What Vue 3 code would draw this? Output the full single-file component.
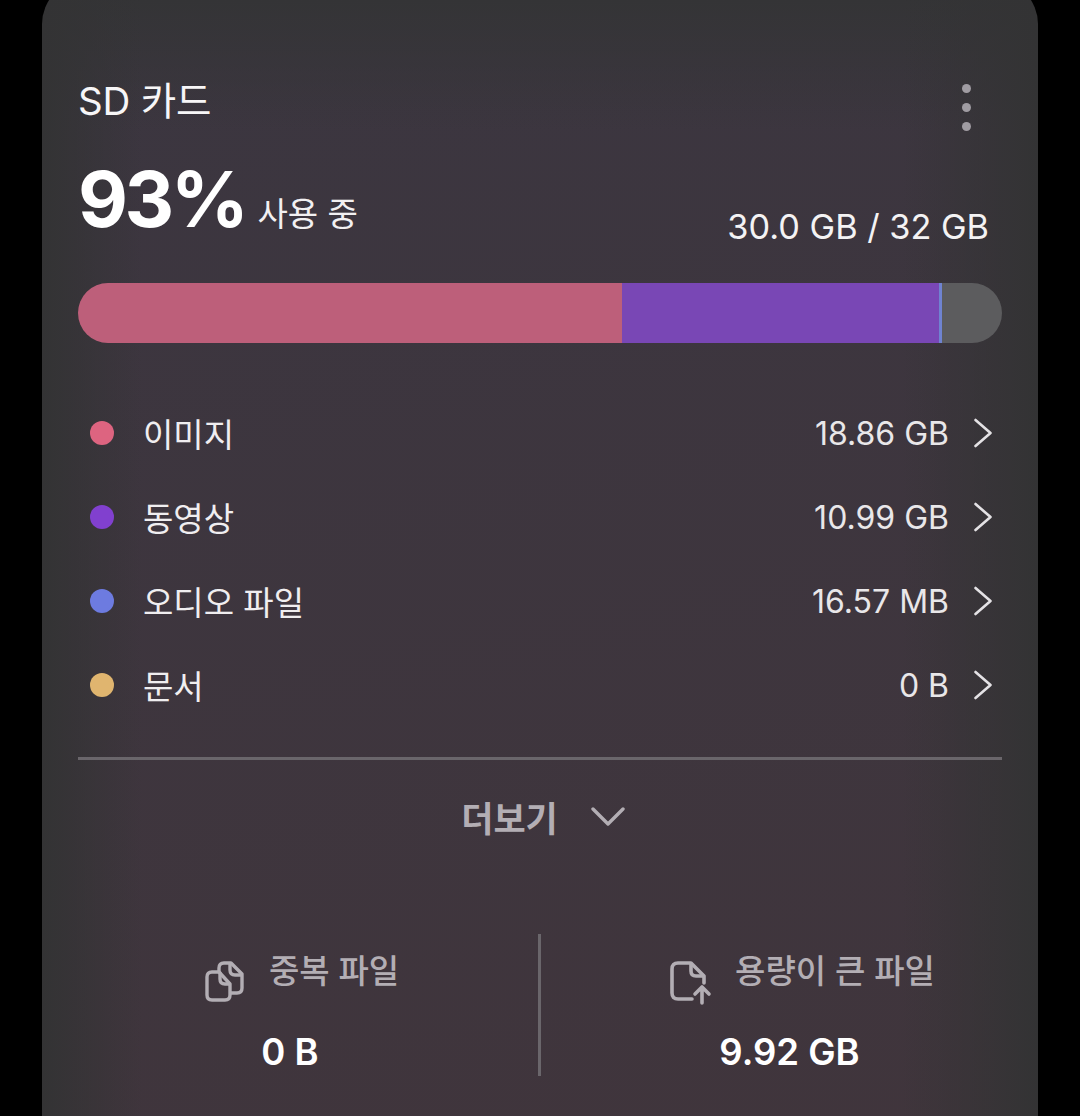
<template>
  <div class="screen">
    <div class="card">
      <div class="head">
        <span class="title">SD 카드</span>
        <div class="more"><i></i><i></i><i></i></div>
      </div>
      <div class="usage">
        <div class="used">
          <span class="percent">93%</span>
          <span class="used-label">사용 중</span>
        </div>
        <span class="total">30.0 GB / 32 GB</span>
      </div>
      <div class="bar">
        <div v-for="seg in segments" :key="seg.color" :style="{ width: seg.width + 'px', background: seg.color }"></div>
      </div>
      <ul class="rows">
        <li v-for="row in rows" :key="row.name" class="row">
          <span class="dot" :style="{ background: row.color }"></span>
          <span class="name">{{ row.name }}</span>
          <span class="size">{{ row.size }}</span>
          <svg class="chevron" width="20" height="30" viewBox="0 0 20 30">
            <path d="M1.5 2 L16.5 15 L1.5 28" fill="none" stroke="#e4e2e5" stroke-width="2.6" stroke-linecap="round" stroke-linejoin="round" />
          </svg>
        </li>
      </ul>
      <div class="expand">
        <span>더보기</span>
        <svg width="34" height="20" viewBox="0 0 34 20">
          <path d="M2 3 L17 18 L32 3" fill="none" stroke="#b3aeb4" stroke-width="3.4" stroke-linecap="round" stroke-linejoin="round" />
        </svg>
      </div>
      <div class="bottom">
        <div class="cell">
          <div class="cell-head">
            <svg class="cell-icon" width="40" height="42" viewBox="0 0 40 42" fill="none" stroke="#b3aeb4" stroke-width="3.4" stroke-linejoin="round" stroke-linecap="round">
              <path d="M11 11 H7 Q2 11 2 16 V34 Q2 39 7 39 H20 Q25 39 25 34 V23 L14 11 Z" />
              <path d="M14 11 V7 Q14 2 19 2 H26 L37 13 V27 Q37 32 32 32 H26" />
              <path d="M25 3 V9 Q25 14 30 14 H36" />
              <path d="M15 12 V18 Q15 23 20 23 H24" />
            </svg>
            <span>중복 파일</span>
          </div>
          <div class="cell-value">0 B</div>
        </div>
        <div class="cell">
          <div class="cell-head cell-head-big">
            <svg class="cell-icon" width="42" height="44" viewBox="0 0 42 44" fill="none" stroke="#b3aeb4" stroke-width="3.6" stroke-linejoin="round" stroke-linecap="round">
              <path d="M22 38 H8 Q2 38 2 32 V8 Q2 2 8 2 H21 L34 15 V22" />
              <path d="M21 3 V10 Q21 15 26 15 H33" />
              <path d="M32 42 V28 M25 33 L32 26 L39 33" />
            </svg>
            <span>용량이 큰 파일</span>
          </div>
          <div class="cell-value">9.92 GB</div>
        </div>
      </div>
    </div>
  </div>
</template>

<script setup>
const segments = [
  { color: "#bd5f7a", width: 544 },
  { color: "#7947b5", width: 317 },
  { color: "#6f83d0", width: 3 },
  { color: "#5c5c5e", width: 60 },
];

const rows = [
  { name: "이미지", size: "18.86 GB", color: "#dd6480" },
  { name: "동영상", size: "10.99 GB", color: "#8140cf" },
  { name: "오디오 파일", size: "16.57 MB", color: "#6d7be0" },
  { name: "문서", size: "0 B", color: "#e0b56f" },
];
</script>

<style>
html,
body {
  margin: 0;
  background: #000;
}
</style>

<style scoped>
.screen {
  width: 1080px;
  height: 1116px;
  overflow: hidden;
  background: #000;
  font-family: Inter, "Noto Sans CJK KR", sans-serif;
  color: #fff;
}
.card {
  box-sizing: border-box;
  width: 996px;
  height: 1180px;
  margin: -20px 0 0 42px;
  padding: 0 36px;
  border-radius: 44px;
  background:
    linear-gradient(to right, #333334 0, rgba(51, 51, 52, 0) 100px, rgba(51, 51, 52, 0) 860px, #333334 100%),
    linear-gradient(to bottom, #343436 20px, rgba(52, 52, 54, 0) 150px),
    linear-gradient(170deg, #3b3640, #40353c);
}
.head {
  display: flex;
  justify-content: space-between;
  height: 142px;
  padding-top: 98px;
  box-sizing: border-box;
}
.title {
  font-size: 38.5px;
  line-height: 46px;
  letter-spacing: -0.2px;
  color: #f7f6f7;
}
.more {
  display: flex;
  flex-direction: column;
  gap: 10px;
  margin: 6px 31px 0 0;
}
.more i {
  display: block;
  flex: none;
  width: 9px;
  height: 9px;
  border-radius: 50%;
  background: #a09ca2;
}
.usage {
  display: flex;
  justify-content: space-between;
  align-items: flex-end;
  height: 119px;
  margin-top: 16px;
  padding: 0 13px 10px 0;
  box-sizing: border-box;
}
.used {
  display: flex;
  align-items: flex-end;
  gap: 12px;
  margin-bottom: 4px;
}
.percent {
  font-size: 77px;
  font-weight: 700;
  line-height: 88px;
  letter-spacing: -3.5px;
}
.used-label {
  font-size: 33px;
  line-height: 44px;
  margin-bottom: 7px;
  color: #f2f0f2;
}
.total {
  font-size: 34.3px;
  line-height: 40px;
  color: #f4f3f4;
}
.bar {
  display: flex;
  height: 60px;
  margin-top: 26px;
  border-radius: 30px;
  overflow: hidden;
}
.rows {
  list-style: none;
  margin: 48px 0 0;
  padding: 0 0 30px;
  border-bottom: 3px solid #6a666b;
}
.row {
  display: flex;
  align-items: center;
  height: 84px;
  padding: 0 8px 0 12px;
}
.dot {
  width: 24px;
  height: 24px;
  border-radius: 50%;
  margin-right: 29px;
}
.name {
  flex: 1;
  font-size: 33px;
  color: #f0eef0;
}
.size {
  font-size: 32px;
  color: #e9e7e9;
  margin-right: 25px;
}
.expand {
  display: flex;
  justify-content: center;
  align-items: center;
  gap: 33px;
  box-sizing: border-box;
  height: 116px;
  padding: 0 0 4px 6px;
  font-size: 35px;
  font-weight: 700;
  color: #b3aeb4;
}
.bottom {
  display: flex;
  margin: 58px -36px 0;
}
.cell {
  flex: 1;
  height: 142px;
  display: flex;
  flex-direction: column;
  align-items: center;
}
.cell:first-child {
  border-right: 3px solid #6a666b;
  flex: 0 0 496px;
}
.cell-head {
  display: flex;
  align-items: flex-start;
  gap: 24px;
  height: 80px;
  padding: 12px 0 0 24px;
  box-sizing: border-box;
  font-size: 33px;
  font-weight: 500;
  line-height: 50px;
  color: #b3aeb4;
}
.cell-head-big {
  gap: 23px;
  padding-left: 26px;
}
.cell-icon {
  margin-top: 15px;
}
.cell-value {
  font-size: 36.5px;
  font-weight: 600;
  line-height: 44px;
  margin-top: 16px;
}
</style>
